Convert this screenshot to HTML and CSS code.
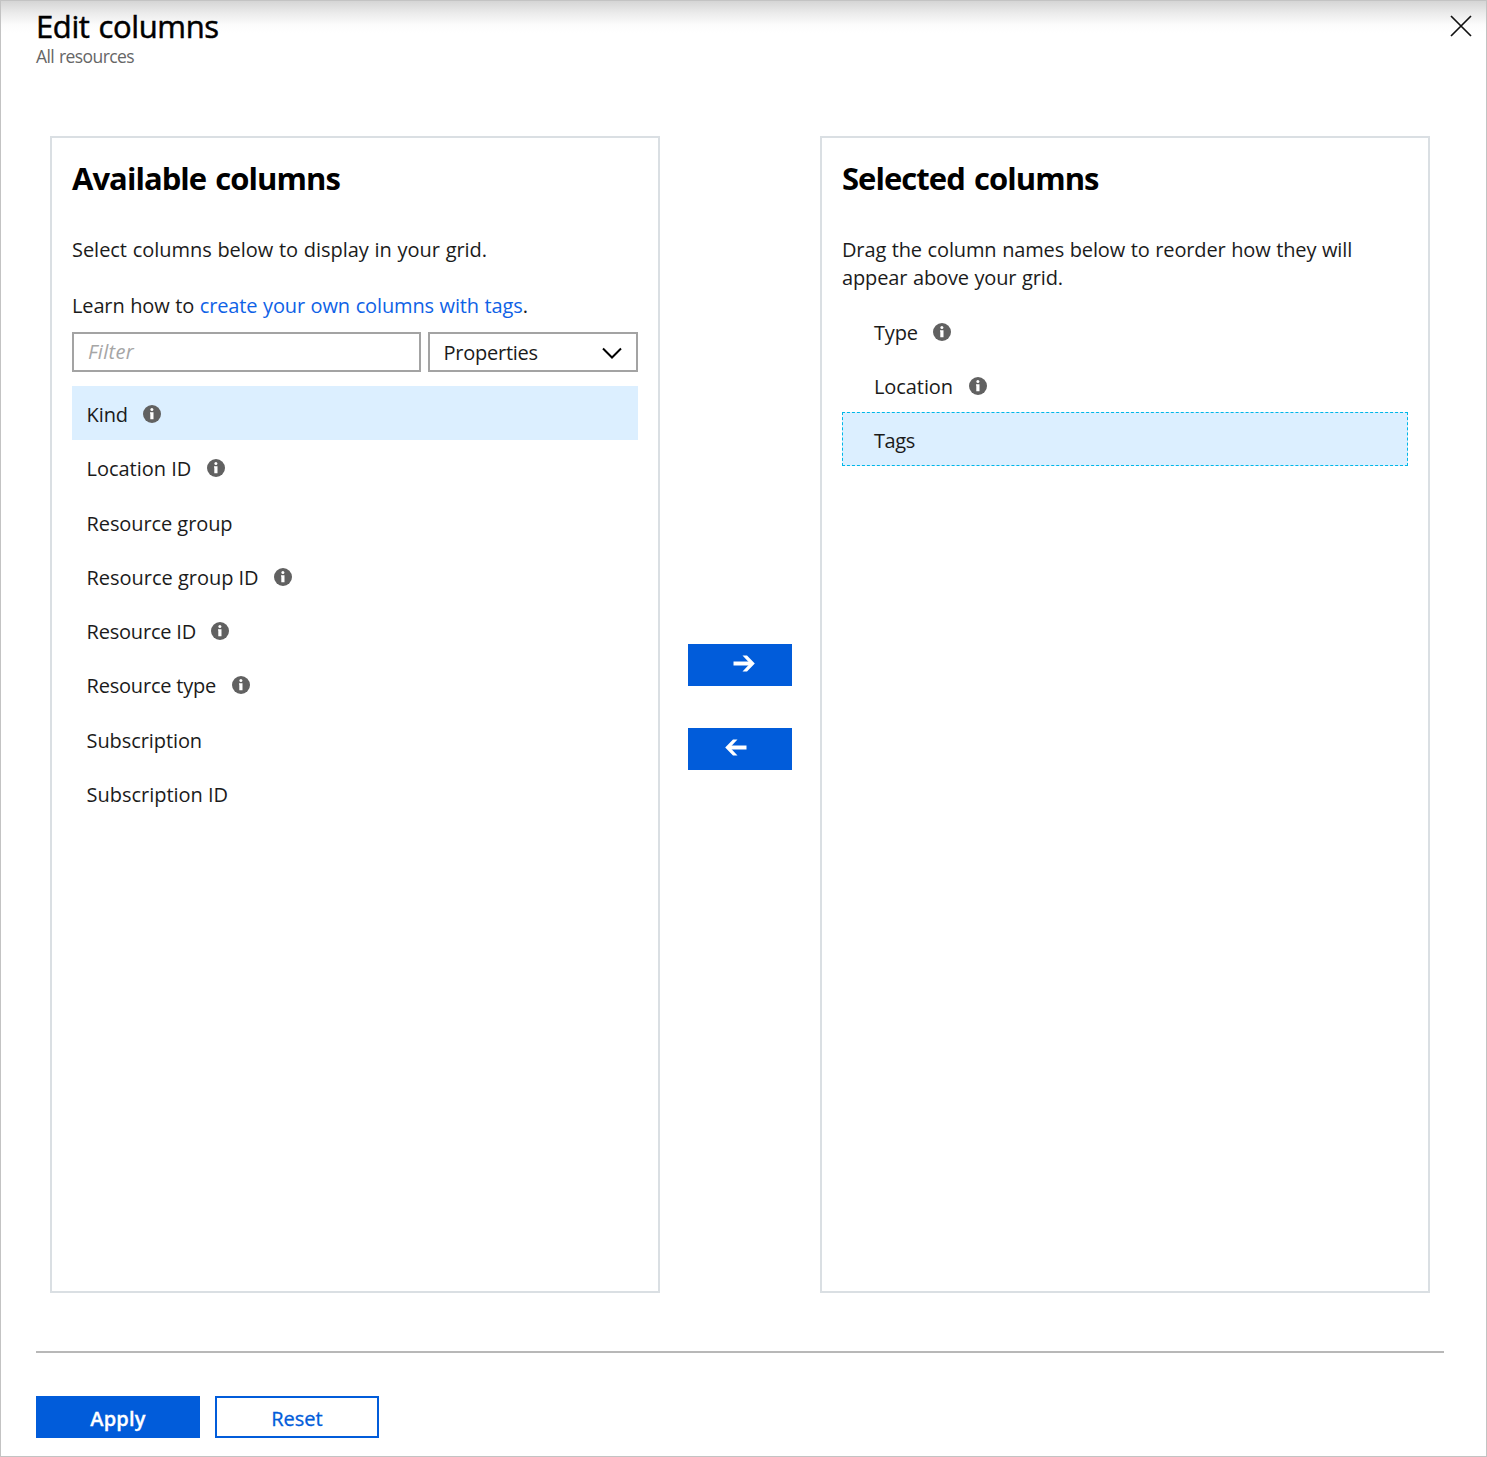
FILE: index.html
```html
<!DOCTYPE html>
<html lang="en">
<head>
<meta charset="utf-8">
<title>Edit columns</title>
<link rel="stylesheet" href="styles.css">
</head>
<body>
<svg class="sprite" aria-hidden="true">
  <symbol id="info" viewBox="0 0 18 18"><circle cx="9" cy="9" r="9" fill="#616161"/><circle cx="8.9" cy="4.5" r="1.5" fill="#fff"/><path d="M7 7.2h3.5v7H7.3V8.4H7z" fill="#fff"/></symbol>
</svg>
<main class="blade">
  <header class="header">
    <div>
      <h1 class="title">Edit columns</h1>
      <p class="subtitle">All resources</p>
    </div>
    <button class="close" aria-label="Close"><svg width="22" height="22" viewBox="0 0 22 22"><path d="M1 1L21 21M21 1L1 21" fill="none" stroke="#111" stroke-width="1.7"/></svg></button>
  </header>

  <div class="picker">
    <section class="panel">
      <h2 class="panel-title">Available columns</h2>
      <p class="text intro">Select columns below to display in your grid.</p>
      <p class="text learn">Learn how to <a class="link">create your own columns with tags</a>.</p>
      <div class="filters">
        <div class="field filter">Filter</div>
        <div class="field select">Properties<svg width="20" height="12" viewBox="0 0 20 12"><path d="M1 1.5L10 10.5L19 1.5" fill="none" stroke="#000" stroke-width="2"/></svg></div>
      </div>
      <ul class="list available">
        <li class="row active">Kind<svg class="info"><use href="#info"/></svg></li>
        <li class="row loose">Location ID<svg class="info"><use href="#info"/></svg></li>
        <li class="row">Resource group</li>
        <li class="row loose">Resource group ID<svg class="info"><use href="#info"/></svg></li>
        <li class="row tight">Resource ID<svg class="info"><use href="#info"/></svg></li>
        <li class="row tight">Resource type<svg class="info"><use href="#info"/></svg></li>
        <li class="row">Subscription</li>
        <li class="row loose">Subscription ID</li>
      </ul>
    </section>

    <div class="movers">
      <button class="move" aria-label="Add"><svg class="to-right" width="22" height="17" viewBox="0 0 22 17"><path d="M0.5 8.5H19" fill="none" stroke="#fff" stroke-width="4"/><path d="M9.5 0.5H14L21.8 8.5L14 16.5H9.5L17 8.5z" fill="#fff"/></svg></button>
      <button class="move" aria-label="Remove"><svg class="to-left" width="22" height="17" viewBox="0 0 22 17"><path d="M21.5 8.5H3" fill="none" stroke="#fff" stroke-width="4"/><path d="M12.5 0.5H8L0.2 8.5L8 16.5H12.5L5 8.5z" fill="#fff"/></svg></button>
    </div>

    <section class="panel">
      <h2 class="panel-title">Selected columns</h2>
      <p class="text">Drag the column names below to reorder how they will appear above your grid.</p>
      <ul class="list selected">
        <li class="row tight">Type<svg class="info"><use href="#info"/></svg></li>
        <li class="row">Location<svg class="info"><use href="#info"/></svg></li>
        <li class="row tight active">Tags</li>
      </ul>
    </section>
  </div>

  <footer class="footer">
    <button class="button primary">Apply</button>
    <button class="button">Reset</button>
  </footer>
</main>
</body>
</html>
```
FILE: styles.css
```css
* { box-sizing: border-box; }
body { margin: 0; font-family: "Open Sans", "Noto Sans", sans-serif; font-size: 20px; line-height: 28px; color: #1b1b1b; background: #fff; }
h1, h2, p, ul { margin: 0; padding: 0; }
ul { list-style: none; }
button { font: inherit; padding: 0; border: 0; background: none; }
.sprite { display: none; }

.blade { height: 1457px; border: 1px solid #c3c3c3; padding: 0 42px 0 35px; background: linear-gradient(#d5d5d5, #ebebeb 12px, #fcfcfc 24px, #fff 32px); }
.header { display: flex; justify-content: space-between; height: 135px; padding-top: 5px; margin-right: -28px; }
.title { font-size: 31px; line-height: 40px; font-weight: 400; letter-spacing: -0.4px; word-spacing: 1.5px; color: #000; -webkit-text-stroke: 0.5px #000; }
.subtitle { font-size: 17.5px; line-height: 20px; letter-spacing: -0.6px; word-spacing: 1px; color: #666; }
.close { height: 22px; width: 22px; margin-top: 9px; }
.close svg { display: block; }

.picker { display: flex; justify-content: space-between; height: 1157px; margin: 0 14px; }
.panel { width: 610px; border: 2px solid #dadfe3; padding: 20px; }
.panel-title { font-size: 31px; line-height: 40px; font-weight: 700; letter-spacing: -0.95px; word-spacing: 2px; color: #000; margin-bottom: 38px; }
.text { letter-spacing: -0.14px; word-spacing: 0.6px; }
.intro { letter-spacing: -0.04px; }
.learn { margin-top: 28px; }
.link { color: #0f62e6; }
.filters { display: flex; justify-content: space-between; margin-top: 12px; }
.field { display: flex; align-items: center; height: 40px; border: 2px solid #a3a3a3; padding: 0 14px; }
.filter { width: 349px; color: #a6a6a6; font-style: italic; letter-spacing: 0.3px; }
.select { width: 210px; justify-content: space-between; padding: 1px 14px 0 13.5px; letter-spacing: -0.25px; }
.row { display: flex; align-items: center; height: 54px; padding: 4px 0 0 13.5px; border: 1px dashed transparent; letter-spacing: -0.08px; }
.row.tight { letter-spacing: -0.2px; }
.row.loose { letter-spacing: -0.02px; }
.available { display: flex; flex-direction: column; gap: 0.25px; margin-top: 14px; }
.available .active { background: #dcefff; }
.info { width: 18px; height: 18px; margin: -2.5px 0 0 15.5px; }
.selected { margin-top: 12px; }
.selected .row { padding-left: 31px; }
.selected .active { background: #dcefff; border-color: #00b7e8; letter-spacing: -0.4px; }

.movers { display: flex; flex-direction: column; gap: 42px; padding-top: 508px; }
.move { display: flex; align-items: center; justify-content: center; width: 104px; height: 42px; background: #015cda; }
.to-right { margin: -3px 0 0 8px; }
.to-left { margin: -3px 9px 0 0; }

.footer { display: flex; gap: 15px; margin-top: 58px; padding-top: 43px; border-top: 2px solid #b8b8b8; }
.button { width: 164px; height: 42px; padding-top: 3px; border: 2px solid #015cda; color: #015cda; -webkit-text-stroke: 0.3px #015cda; }
.primary { background: #015cda; color: #fff; font-weight: 600; letter-spacing: 0.2px; -webkit-text-stroke: 0.3px #fff; }
```
